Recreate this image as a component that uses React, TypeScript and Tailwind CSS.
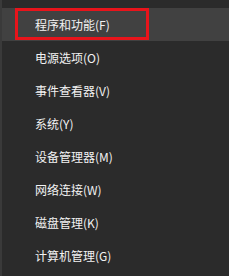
import React from "react";

const items = [
  "程序和功能(F)",
  "电源选项(O)",
  "事件查看器(V)",
  "系统(Y)",
  "设备管理器(M)",
  "网络连接(W)",
  "磁盘管理(K)",
  "计算机管理(G)",
];

export default function App() {
  return (
    <div
      className="w-[229px] h-[276px] bg-[#2b2b2b] border-l-2 border-[#3a3a3a] overflow-hidden pt-[8px]"
      style={{ fontFamily: '"Noto Sans CJK SC", "Noto Sans", sans-serif' }}
    >
      {items.map((t, i) => (
        <div
          key={t}
          className={
            "relative h-[33px] flex items-center pl-[33px] text-[12px] text-[#f2f2f2] " +
            (i === 0 ? "bg-[#414141]" : "")
          }
        >
          <span className="leading-none">{t}</span>
          {i === 0 && (
            <div className="absolute left-[13px] top-[0px] w-[134px] h-[32px] border-[3px] border-[#e8141b]" />
          )}
        </div>
      ))}
    </div>
  );
}
